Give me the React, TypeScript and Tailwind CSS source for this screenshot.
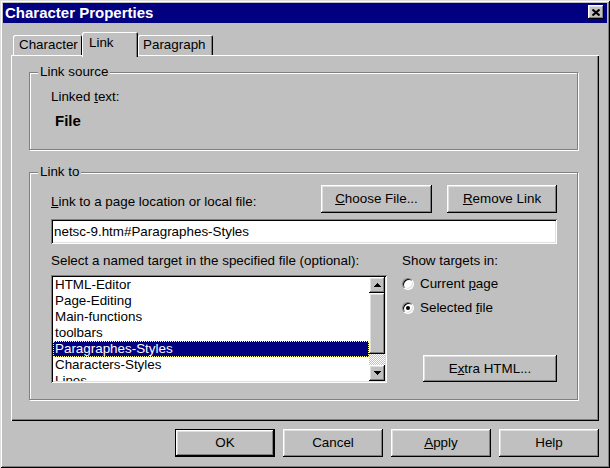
import type { ReactNode } from "react";

const raised =
  "bg-[#c0c0c0] shadow-[inset_-1px_-1px_0_#000,inset_1px_1px_0_#fff,inset_-2px_-2px_0_#808080,inset_2px_2px_0_#dfdfdf]";
const sunken =
  "bg-white shadow-[inset_1px_1px_0_#808080,inset_-1px_-1px_0_#fff,inset_2px_2px_0_#000,inset_-2px_-2px_0_#dfdfdf]";

function Button({ className = "", children }: { className?: string; children: ReactNode }) {
  return <div className={`${raised} flex items-center justify-center leading-[16px] ${className}`}>{children}</div>;
}

function GroupBox({ title, className = "", children }: { title: string; className?: string; children: ReactNode }) {
  return (
    <div className={`w-[549px] border border-[#808080] shadow-[inset_1px_1px_0_#fff,1px_1px_0_#fff] ${className}`}>
      <div className="-mt-[9px] ml-[8px] w-fit bg-[#c0c0c0] px-[2px] leading-[16px]">{title}</div>
      {children}
    </div>
  );
}

function Radio({ checked, className = "", children }: { checked?: boolean; className?: string; children: ReactNode }) {
  return (
    <div className={`flex items-center h-[16px] ${className}`}>
      <div className="w-[12px] h-[12px] rounded-full bg-white border border-t-[#808080] border-l-[#808080] border-r-white border-b-white shadow-[inset_1px_1px_0_#000,inset_-1px_-1px_0_#dfdfdf] flex items-center justify-center">
        {checked && <div className="w-[4px] h-[4px] rounded-full bg-black" />}
      </div>
      <span className="ml-[6px] leading-[16px]">{children}</span>
    </div>
  );
}

function Arrow({ down }: { down?: boolean }) {
  const rows = down ? [7, 5, 3, 1] : [1, 3, 5, 7];
  return (
    <svg width="7" height="4" viewBox="0 0 7 4" shapeRendering="crispEdges">
      {rows.map((w, i) => (
        <rect key={i} x={(7 - w) / 2} y={i} width={w} height={1} fill="#000" />
      ))}
    </svg>
  );
}

const targets = [
  "HTML-Editor",
  "Page-Editing",
  "Main-functions",
  "toolbars",
  "Paragraphes-Styles",
  "Characters-Styles",
  "Lines",
];

function ListBox() {
  return (
    <div className={`${sunken} mt-[6px] w-[336px] h-[108px] p-[2px] flex`}>
      <div className="flex-1 overflow-hidden">
        {targets.map((t) => (
          <div
            key={t}
            className={
              t === "Paragraphes-Styles"
                ? "h-[16px] leading-[16px] pl-[2px] bg-[#000080] text-white outline-1 outline-dotted outline-[#ffff80] -outline-offset-1"
                : "h-[16px] leading-[16px] pl-[2px]"
            }
          >
            {t}
          </div>
        ))}
      </div>
      <div className="w-[16px] flex flex-col">
        <div className={`${raised} h-[16px] flex items-center justify-center`}>
          <Arrow />
        </div>
        <div className={`${raised} h-[61px]`} />
        <div className="h-[11px] bg-[repeating-conic-gradient(#fff_0%_25%,#c0c0c0_0%_50%)] bg-[length:2px_2px]" />
        <div className={`${raised} h-[16px] flex items-center justify-center`}>
          <Arrow down />
        </div>
      </div>
    </div>
  );
}

export default function App() {
  return (
    <div className="w-[610px] h-[468px] bg-[#c0c0c0] p-[3px] flex flex-col font-['Liberation_Sans',Arial,sans-serif] text-[13.4px] text-black shadow-[inset_1px_1px_0_#dfdfdf,inset_-1px_-1px_0_#000,inset_2px_2px_0_#fff,inset_-2px_-2px_0_#808080]">
      {/* title bar */}
      <div className="h-[20px] bg-[#000080] flex justify-between pl-[2px] pr-[3px]">
        <div className="text-white font-bold text-[15px] leading-[20px]">Character Properties</div>
        <div className={`${raised} mt-[2px] w-[16px] h-[14px] flex items-center justify-center`}>
          <svg width="8" height="7" viewBox="0 0 8 7">
            <path d="M0.5 0.5 L7.5 6.5 M7.5 0.5 L0.5 6.5" stroke="#000" strokeWidth="2" />
          </svg>
        </div>
      </div>

      {/* tabs */}
      <div className="mt-[9px] ml-[10px] flex items-end -mb-[2px] relative z-10">
        <div className="mb-[2px] w-[69px] h-[20px] pl-[6px] pt-[2px] leading-[16px] rounded-t-[2px] shadow-[inset_1px_1px_0_#fff,inset_-1px_0_0_#000]">
          Character
        </div>
        <div className="w-[56px] h-[25px] pl-[7px] pt-[3px] leading-[16px] bg-[#c0c0c0] rounded-t-[2px] shadow-[inset_1px_1px_0_#fff,inset_-1px_0_0_#000,inset_-2px_0_0_#808080]">
          Link
        </div>
        <div className="mb-[2px] w-[75px] h-[20px] pl-[5px] pt-[2px] leading-[16px] rounded-t-[2px] shadow-[inset_1px_1px_0_#fff,inset_-1px_0_0_#000,inset_-2px_0_0_#808080]">
          Paragraph
        </div>
      </div>

      {/* panel */}
      <div className="h-[366px] mx-[8px] pt-[17px] pl-[18px] shadow-[inset_1px_1px_0_#fff,inset_-1px_-1px_0_#000,inset_-2px_-2px_0_#808080]">
        <GroupBox title="Link source" className="h-[78px]">
          <div className="mt-[9px] pl-[21px] leading-[16px]">
            Linked <u>t</u>ext:
          </div>
          <div className="mt-[7px] pl-[25px] text-[15px] font-bold leading-[18px]">File</div>
        </GroupBox>

        <GroupBox title="Link to" className="mt-[22px] h-[228px]">
          <div className="mt-[5px] pl-[21px] pr-[20px] flex items-end">
            <div className="flex-1 mb-[3px] leading-[16px]">
              <u>L</u>ink to a page location or local file:
            </div>
            <Button className="w-[111px] h-[28px]">
              <span>
                <u>C</u>hoose File...
              </span>
            </Button>
            <Button className="ml-[15px] w-[110px] h-[28px]">
              <span>
                <u>R</u>emove Link
              </span>
            </Button>
          </div>

          <div className={`${sunken} mt-[6px] ml-[21px] mr-[20px] h-[25px] pl-[3px] flex items-center leading-[16px]`}>
            netsc-9.htm#Paragraphes-Styles
          </div>

          <div className="mt-[9px] pl-[21px] pr-[20px] flex">
            <div className="w-[336px]">
              <div className="leading-[16px] whitespace-nowrap">Select a named target in the specified file (optional):</div>
              <ListBox />
            </div>
            <div className="ml-[15px] flex-1 flex flex-col">
              <div className="leading-[16px]">Show targets in:</div>
              <Radio className="mt-[7px]">
                Current <u>p</u>age
              </Radio>
              <Radio checked className="mt-[8px]">
                Selected <u>f</u>ile
              </Radio>
              <Button className="mt-[39px] self-end w-[134px] h-[27px]">
                <span>
                  E<u>x</u>tra HTML...
                </span>
              </Button>
            </div>
          </div>
        </GroupBox>
      </div>

      {/* footer buttons */}
      <div className="mt-[8px] mr-[8px] flex justify-end gap-[8px]">
        <div className="w-[100px] h-[28px] border border-black">
          <Button className="w-full h-full">OK</Button>
        </div>
        <Button className="w-[100px] h-[28px]">Cancel</Button>
        <Button className="w-[100px] h-[28px]">
          <span>
            <u>A</u>pply
          </span>
        </Button>
        <Button className="w-[100px] h-[28px]">Help</Button>
      </div>
    </div>
  );
}
